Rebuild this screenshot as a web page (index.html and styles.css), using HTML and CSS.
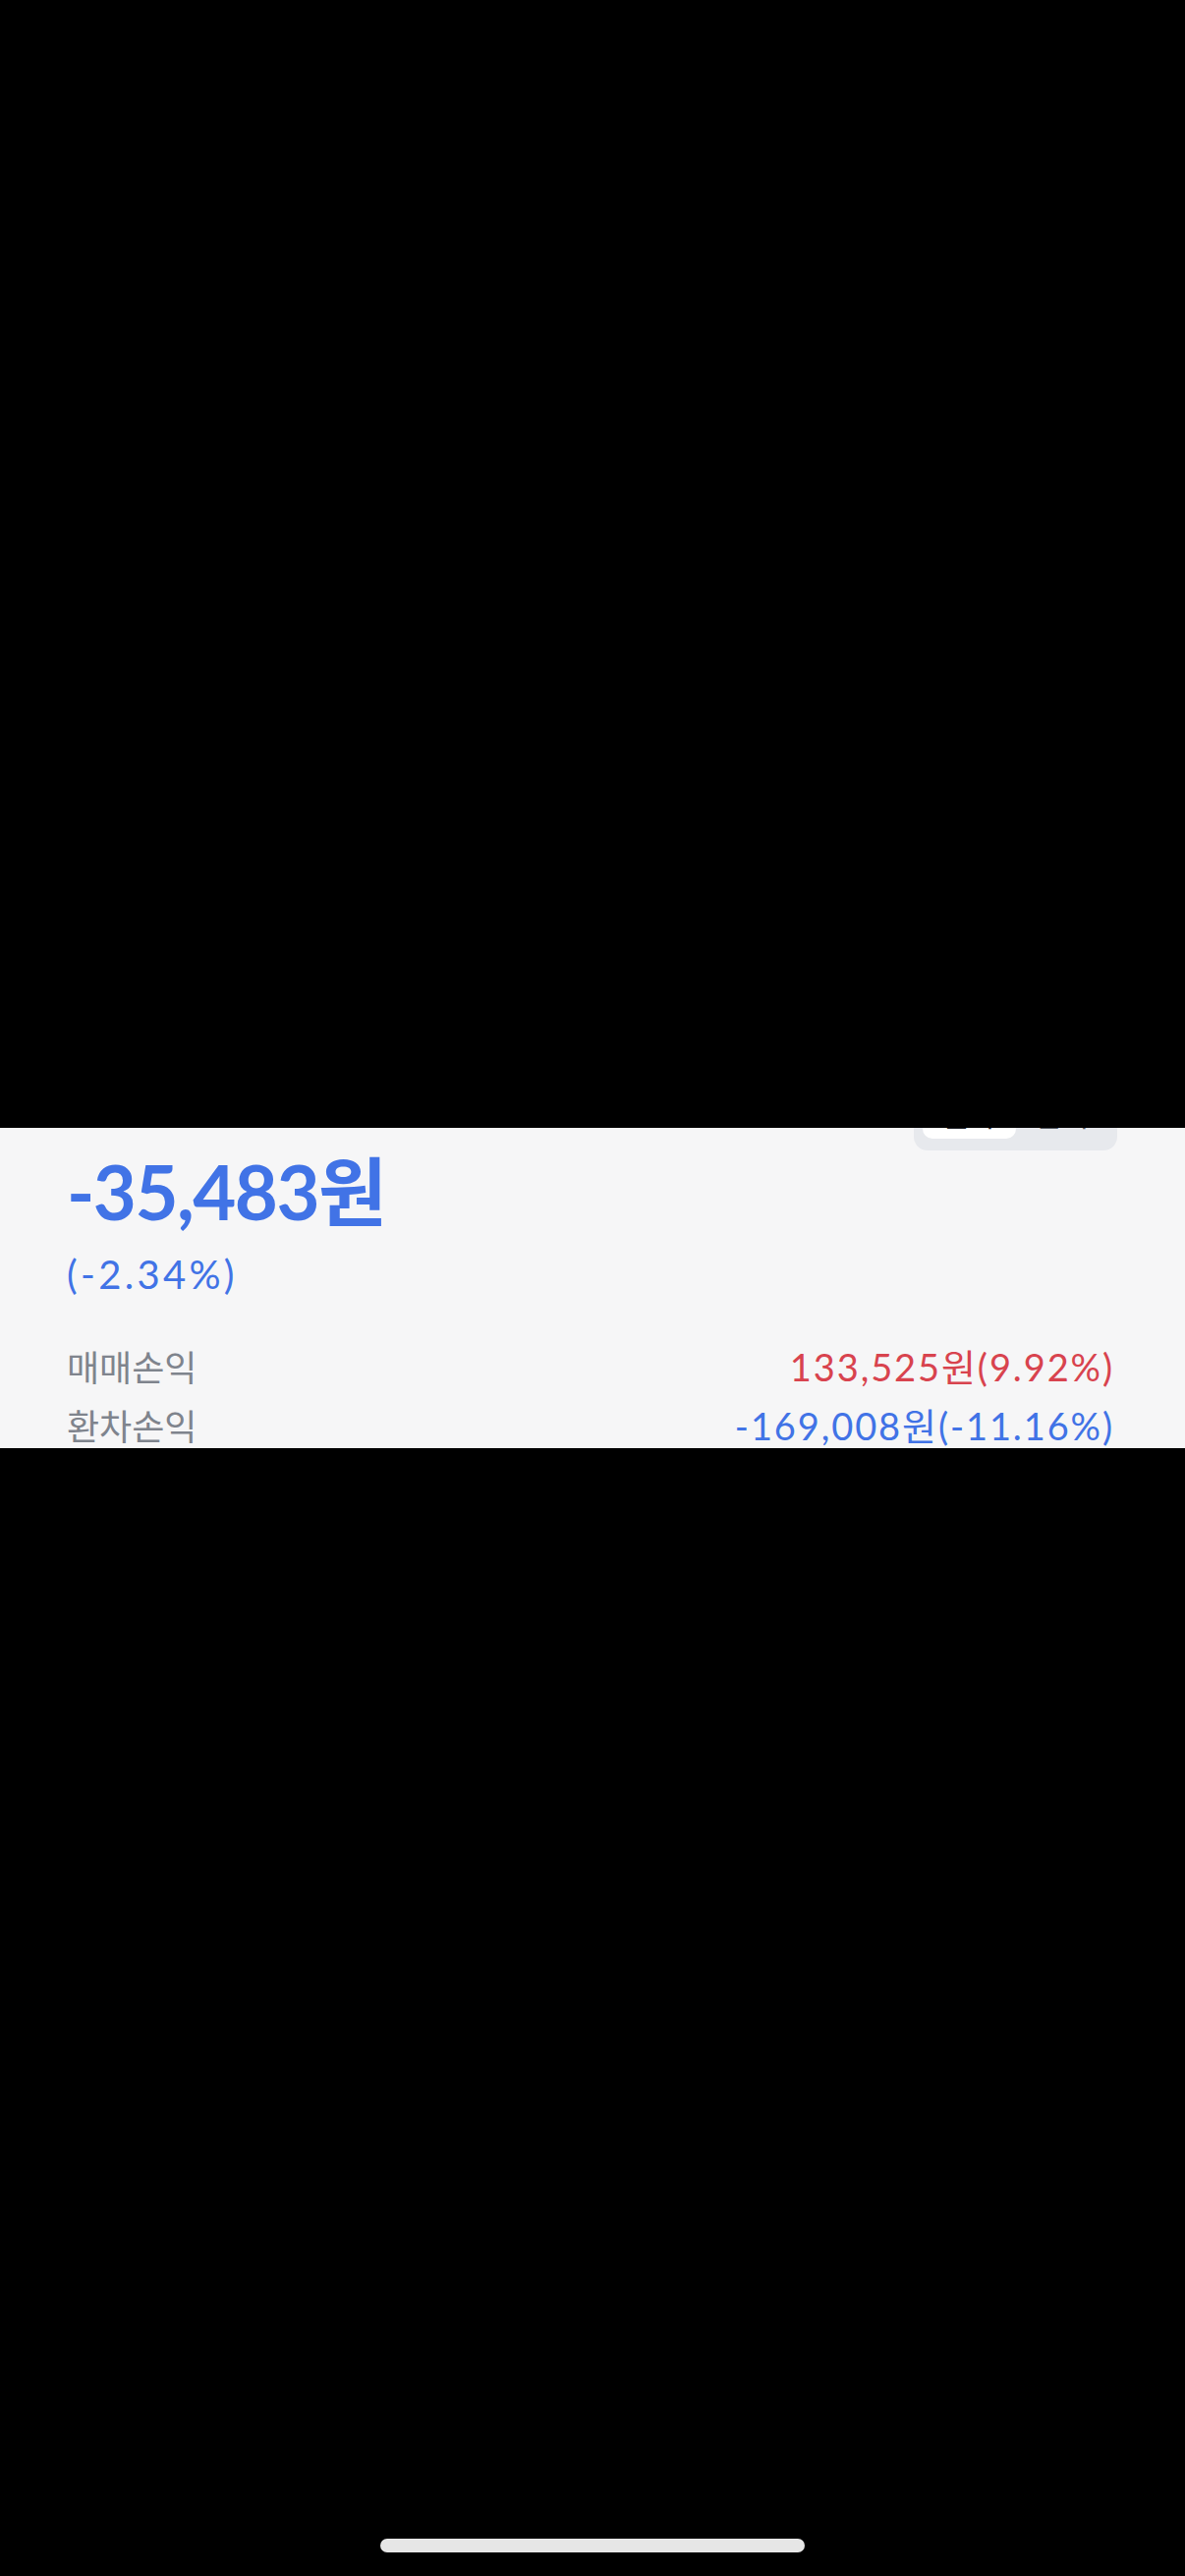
FILE: index.html
```html
<!DOCTYPE html>
<html lang="ko">
<head>
<meta charset="UTF-8" />
<meta name="viewport" content="width=device-width, initial-scale=1" />
<title>손익</title>
<link rel="stylesheet" href="styles.css">
</head>
<body>
<div class="mask"></div>
<section class="pnl">
  <div class="pnl-head">
    <div class="seg">
      <span class="seg-item on">원화</span>
      <span class="seg-item">달러</span>
    </div>
  </div>
  <div class="total">-35,483원</div>
  <div class="rate">(-2.34%)</div>
  <ul class="rows">
    <li><span class="lbl">매매손익</span><span class="val up">133,525원(9.92%)</span></li>
    <li><span class="lbl">환차손익</span><span class="val down">-169,008원(-11.16%)</span></li>
  </ul>
</section>
<div class="bottom">
  <div class="home-bar"></div>
</div>
</body>
</html>
```

FILE: styles.css
```css
html, body {
  margin: 0;
  padding: 0;
  background: #000;
}
body {
  width: 1206px;
  height: 2622px;
  overflow: hidden;
  font-family: Lato, "Noto Sans CJK KR", sans-serif;
}
.mask {
  height: 1148px;
}

/* visible strip */
.pnl {
  height: 326px;
  overflow: hidden;
  background: #f6f6f7;
  padding: 0 72px 0 68px;
  box-sizing: border-box;
}
.pnl-head {
  display: flex;
  justify-content: flex-end;
  margin-top: -47px;
  margin-right: -3px;
  height: 70px;
}
.seg {
  display: flex;
  width: 207px;
  padding: 9px 9px 12px;
  box-sizing: border-box;
  background: #e7e9ed;
  border-radius: 14px;
}
.seg-item {
  flex: 1;
  text-align: center;
  font-size: 30px;
  line-height: 49px;
  color: #555a63;
  border-radius: 10px;
}
.seg-item.on {
  background: #fff;
  color: #1f2329;
}

.total {
  margin-top: 2px;
  font-size: 76px;
  font-weight: 700;
  line-height: 80px;
  letter-spacing: -1.5px;
  color: #4173e6;
}
.rate {
  margin-top: 19px;
  font-size: 40px;
  line-height: 50px;
  letter-spacing: 3.3px;
  color: #4173e6;
}
.rows {
  list-style: none;
  margin: 40px 0 0;
  padding: 0;
}
.rows li {
  display: flex;
  justify-content: space-between;
  align-items: baseline;
  font-size: 36px;
  line-height: 59px;
}
.lbl {
  color: #7f848d;
}
.val {
  font-size: 38px;
  letter-spacing: 1.9px;
}
.val.up {
  color: #d8434e;
}
.val.down {
  color: #4173e6;
}

.bottom {
  height: 1148px;
  display: flex;
  flex-direction: column;
  justify-content: flex-end;
  align-items: center;
}
.home-bar {
  width: 432px;
  height: 14px;
  margin-bottom: 24px;
  border-radius: 7px;
  background: #e6e6e6;
}
```
